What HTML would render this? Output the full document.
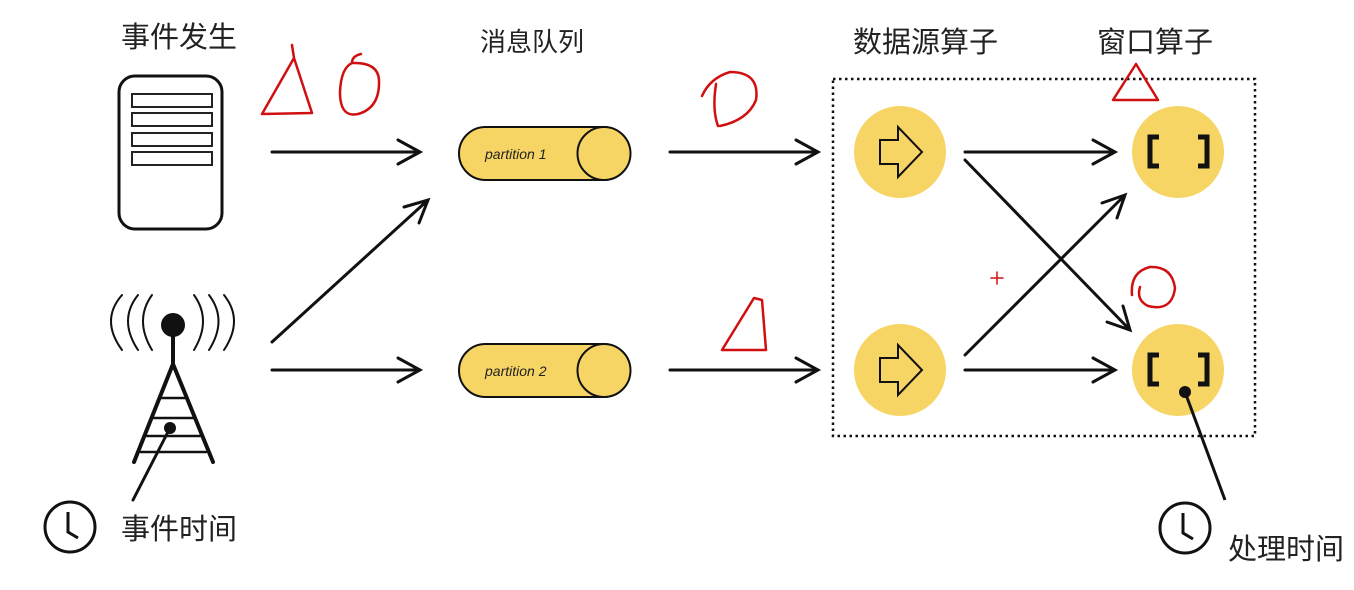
<!DOCTYPE html>
<html><head><meta charset="utf-8"><style>
html,body{margin:0;padding:0;background:#fff;width:1354px;height:590px;overflow:hidden}
svg{display:block}
text{font-family:"Liberation Sans","Noto Sans CJK SC",sans-serif}
</style></head><body>
<svg width="1354" height="590" viewBox="0 0 1354 590">
<g font-size="29" fill="#222">
<text x="121" y="47">事件发生</text>
<text x="480" y="51" font-size="26">消息队列</text>
<text x="853" y="52">数据源算子</text>
<text x="1097" y="52">窗口算子</text>
<text x="121" y="539">事件时间</text>
<text x="1228" y="559">处理时间</text>
</g>
<!-- server -->
<rect x="119" y="76" width="103" height="153" rx="16" fill="#fff" stroke="#111" stroke-width="3"/>
<g fill="#fff" stroke="#222" stroke-width="2">
<rect x="132" y="94" width="80" height="13"/><rect x="132" y="113" width="80" height="13"/>
<rect x="132" y="133" width="80" height="13"/><rect x="132" y="152" width="80" height="13"/>
</g>
<!-- tower -->
<g stroke="#111" fill="none" stroke-linecap="round">
<path d="M122,295 Q100,320 122,350 M138,295 Q118,320 138,350 M152,295 Q134,320 152,350" stroke-width="2"/>
<path d="M194,295 Q212,320 194,350 M209,295 Q228,320 209,350 M224,295 Q244,320 224,350" stroke-width="2"/>
<path d="M173,325 V364 M173,364 L134,462 M173,364 L213,462" stroke-width="4"/>
<path d="M160,398 H186 M153,418 H193 M147,436 H200 M141,452 H206" stroke-width="2.5"/>
<path d="M170,428 L133,500" stroke-width="3"/>
</g>
<circle cx="173" cy="325" r="12" fill="#111"/>
<circle cx="170" cy="428" r="6" fill="#111"/>
<!-- arrows -->
<g stroke="#111" stroke-width="3" fill="none" stroke-linecap="round">
<path d="M272,152 H420 M398,140 L420,152 L398,164"/>
<path d="M272,370 H420 M398,358 L420,370 L398,382"/>
<path d="M272,342 L428,200 M419,223 L428,200 L404,207"/>
<path d="M670,152 H818 M796,140 L818,152 L796,164"/>
<path d="M670,370 H818 M796,358 L818,370 L796,382"/>
<path d="M965,152 H1115 M1093,140 L1115,152 L1093,164"/>
<path d="M965,370 H1115 M1093,358 L1115,370 L1093,382"/>
<path d="M965,160 L1130,330 M1123,306 L1130,330 L1107,322"/>
<path d="M965,355 L1125,195 M1117,218 L1125,195 L1102,203"/>
</g>
<!-- partitions -->
<g stroke="#111" stroke-width="2" fill="#f7d565">
<rect x="459" y="127" width="171" height="53" rx="26.5"/><circle cx="604" cy="153.5" r="26.5"/>
<rect x="459" y="344" width="171" height="53" rx="26.5"/><circle cx="604" cy="370.5" r="26.5"/>
</g>
<g font-size="14" font-style="italic" fill="#222">
<text x="485" y="159">partition 1</text>
<text x="485" y="376">partition 2</text>
</g>
<!-- dotted box -->
<rect x="833" y="79" width="422" height="357" fill="none" stroke="#111" stroke-width="2.5" stroke-dasharray="2.5,3.5"/>
<g fill="#f7d565">
<circle cx="900" cy="152" r="46"/><circle cx="900" cy="370" r="46"/>
<circle cx="1178" cy="152" r="46"/><circle cx="1178" cy="370" r="46"/>
</g>
<g fill="none" stroke="#111" stroke-width="2">
<path d="M880,140 H898 V127 L922,152 L898,177 V164 H880 Z"/>
<path d="M880,358 H898 V345 L922,370 L898,395 V382 H880 Z"/>
</g>
<g fill="none" stroke="#111" stroke-width="5">
<path d="M1159,137 H1150 V166 H1159 M1198,137 H1207 V166 H1198"/>
<path d="M1159,355 H1150 V384 H1159 M1198,355 H1207 V384 H1198"/>
</g>
<!-- clocks -->
<g stroke="#111" fill="none" stroke-width="3">
<circle cx="70" cy="527" r="25"/><path d="M68,512 V532 L78,538"/>
<circle cx="1185" cy="528" r="25"/><path d="M1183,513 V533 L1193,539"/>
<path d="M1185,392 L1225,500"/>
</g>
<circle cx="1185" cy="392" r="6" fill="#111"/>
<!-- red annotations -->
<g stroke="#d01010" stroke-width="2.5" fill="none" stroke-linecap="round" stroke-linejoin="round">
<path d="M292,45 L294,58 L262,114 L312,113 L294,58"/>
<path d="M361,54 Q352,56 352,63 Q341,68 340,92 Q340,118 358,114 Q380,108 379,80 Q378,62 352,63"/>
<path d="M702,96 Q710,78 730,72 Q760,72 756,100 Q748,120 720,126 M716,84 Q712,110 718,126"/>
<path d="M754,298 L722,350 L766,350 L762,300 Z"/>
<path d="M1136,64 L1113,100 L1158,100 Z"/>
<path d="M1140,287 Q1136,300 1148,306 Q1172,312 1175,288 Q1172,266 1150,267 Q1130,272 1132,295"/>
<path d="M997,272 V284 M991,278 H1003" stroke-width="1.5"/>
</g>
</svg>
</body></html>
